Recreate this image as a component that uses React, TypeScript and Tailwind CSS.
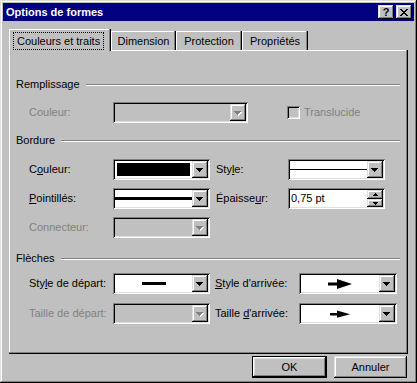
import type { ReactNode } from "react";

const sunken = "shadow-[inset_1px_1px_#808080,inset_-1px_-1px_#fff,inset_2px_2px_#000,inset_-2px_-2px_#dfdfdf]";
const raised = "bg-[#c0c0c0] shadow-[inset_-1px_-1px_#000,inset_1px_1px_#dfdfdf,inset_-2px_-2px_#808080,inset_2px_2px_#fff]";

function ArrowDown({ disabled }: { disabled?: boolean }) {
    return (
        <svg width="8" height="5" viewBox="0 0 8 5" shapeRendering="crispEdges">
            {disabled && <path d="M1 1h7v1H1z M2 2h5v1H2z M3 3h3v1H3z M4 4h1v1H4z" fill="#fff" />}
            <path d="M0 0h7v1H0z M1 1h5v1H1z M2 2h3v1H2z M3 3h1v1H3z" fill={disabled ? "#808080" : "#000"} />
        </svg>
    );
}

function Combo({ w, disabled, children }: { w: string; disabled?: boolean; children?: ReactNode }) {
    return (
        <div className={`flex h-[21px] shrink-0 p-[2px] ${sunken} ${w}`}>
            <div className={`flex flex-1 items-center ${disabled ? "bg-[#c0c0c0]" : "bg-white"}`}>{children}</div>
            <div className={`flex w-[16px] items-center justify-center pt-[1px] ${raised}`}>
                <ArrowDown disabled={disabled} />
            </div>
        </div>
    );
}

function Section({ title, className }: { title: string; className: string }) {
    return (
        <div className={`flex h-[13px] items-center ${className}`}>
            <span className="leading-[13px]">{title}</span>
            <div className="ml-[6px] h-[2px] flex-1 border-t border-b border-t-[#808080] border-b-white" />
        </div>
    );
}

function Label({ w, disabled, children }: { w: string; disabled?: boolean; children: ReactNode }) {
    return <span className={`shrink-0 leading-[13px] ${w} ${disabled ? "text-[#808080]" : "text-black"}`}>{children}</span>;
}

function Arrow({ big }: { big?: boolean }) {
    return big ? (
        <svg width="24" height="10" viewBox="0 0 24 10">
            <path d="M0 3.5h11v3H0z M9 0 L24 5 L9 10z" fill="#000" />
        </svg>
    ) : (
        <svg width="20" height="8" viewBox="0 0 20 8">
            <path d="M0 3h9v2.5H0z M7 0.5 L20 4.2 L7 7.8z" fill="#000" />
        </svg>
    );
}

export default function App() {
    return (
        <div
            className={`flex h-[383px] w-[417px] flex-col bg-[#c0c0c0] p-[3px] font-['Liberation_Sans',Arial,sans-serif] text-[11px] text-black shadow-[inset_-1px_-1px_#000,inset_1px_1px_#dfdfdf,inset_-2px_-2px_#808080,inset_2px_2px_#fff]`}
        >
            {/* Barre de titre */}
            <div className="flex h-[18px] items-center bg-[#000080] pl-[3px] pr-[2px]">
                <span className="flex-1 text-[11px] font-bold text-white">Options de formes</span>
                <div className={`flex h-[14px] w-[16px] items-center justify-center text-[11px] font-bold leading-none text-black ${raised}`}>?</div>
                <div className={`ml-[2px] flex h-[14px] w-[16px] items-center justify-center ${raised}`}>
                    <svg width="8" height="7" viewBox="0 0 8 7" shapeRendering="crispEdges">
                        <path d="M0 0h2v1H0z M6 0h2v1H6z M1 1h2v1H1z M5 1h2v1H5z M2 2h4v1H2z M3 3h2v1H3z M2 4h4v1H2z M1 5h2v1H1z M5 5h2v1H5z M0 6h2v1H0z M6 6h2v1H6z" fill="#000" />
                    </svg>
                </div>
            </div>

            {/* Onglets */}
            <div className="relative z-10 -mb-[1px] ml-[6px] mt-[8px] flex h-[22px] items-end">
                <div className="flex h-[22px] w-[102px] items-start bg-[#c0c0c0] pl-[4px] pt-[3px] shadow-[inset_-1px_0_#000,inset_-2px_0_#808080,inset_1px_1px_#fff]">
                    <span className="h-[18px] border border-dotted border-black px-[3px] leading-[16px]">Couleurs et traits</span>
                </div>
                {[
                    ["Dimension", "w-[65px]"],
                    ["Protection", "w-[66px]"],
                    ["Propriétés", "w-[66px]"],
                ].map(([t, w]) => (
                    <div
                        key={t}
                        className={`mb-[1px] flex h-[19px] items-center justify-center pt-[1px] shadow-[inset_-1px_0_#000,inset_-2px_0_#808080,inset_1px_1px_#fff] ${w}`}
                    >
                        {t}
                    </div>
                ))}
            </div>

            {/* Panneau */}
            <div className="ml-[6px] flex h-[304px] w-[399px] flex-col pl-[7px] pr-[8px] pt-[28px] shadow-[inset_-1px_-1px_#000,inset_-2px_-2px_#808080,inset_1px_1px_#fff]">
                <Section title="Remplissage" className="" />
                <div className="mt-[11px] flex items-center pl-[13px]">
                    <Label w="w-[84px]" disabled>
                        Couleur:
                    </Label>
                    <Combo w="w-[135px]" disabled />
                    <div className="ml-[39px] h-[13px] w-[13px] bg-[#c0c0c0] shadow-[inset_1px_1px_#808080,inset_-1px_-1px_#fff,inset_2px_2px_#000,inset_-2px_-2px_#dfdfdf]" />
                    <span className="ml-[4px] text-[#808080]">Translucide</span>
                </div>

                <Section title="Bordure" className="mt-[11px]" />
                <div className="mt-[12px] flex items-center pl-[13px]">
                    <Label w="w-[84px]">
                        C<u>o</u>uleur:
                    </Label>
                    <Combo w="w-[97px]">
                        <div className="mx-[2px] h-[13px] flex-1 bg-black" />
                    </Combo>
                    <Label w="ml-[6px] w-[72px]">
                        Sty<u>l</u>e:
                    </Label>
                    <Combo w="w-[97px]">
                        <div className="h-[1px] flex-1 bg-black" />
                    </Combo>
                </div>
                <div className="mt-[8px] flex items-center pl-[13px]">
                    <Label w="w-[84px]">
                        <u>P</u>ointillés:
                    </Label>
                    <Combo w="w-[97px]">
                        <div className="h-[3px] flex-1 bg-black" />
                    </Combo>
                    <Label w="ml-[6px] w-[72px]">
                        Épaisse<u>u</u>r:
                    </Label>
                    <div className={`flex h-[21px] w-[97px] p-[2px] ${sunken}`}>
                        <div className="flex flex-1 items-center bg-white pl-[1px]">0,75 pt</div>
                        <div className="flex w-[16px] flex-col">
                            <div className={`flex h-[9px] items-center justify-center ${raised}`}>
                                <svg width="5" height="3" viewBox="0 0 5 3" shapeRendering="crispEdges">
                                    <path d="M2 0h1v1H2z M1 1h3v1H1z M0 2h5v1H0z" fill="#000" />
                                </svg>
                            </div>
                            <div className={`flex h-[8px] items-center justify-center ${raised}`}>
                                <svg width="5" height="3" viewBox="0 0 5 3" shapeRendering="crispEdges">
                                    <path d="M0 0h5v1H0z M1 1h3v1H1z M2 2h1v1H2z" fill="#000" />
                                </svg>
                            </div>
                        </div>
                    </div>
                </div>
                <div className="mt-[8px] flex items-center pl-[13px]">
                    <Label w="w-[84px]" disabled>
                        Connecteur:
                    </Label>
                    <Combo w="w-[97px]" disabled />
                </div>

                <Section title="Flèches" className="mt-[14px]" />
                <div className="mt-[8px] flex items-center pl-[13px]">
                    <Label w="w-[84px]">
                        Sty<u>l</u>e de départ:
                    </Label>
                    <Combo w="w-[97px]">
                        <div className="flex flex-1 justify-center">
                            <div className="h-[3px] w-[24px] bg-black" />
                        </div>
                    </Combo>
                    <Label w="ml-[5px] w-[84px]">
                        <u>S</u>tyle d'arrivée:
                    </Label>
                    <Combo w="w-[98px]">
                        <div className="flex flex-1 justify-center">
                            <Arrow big />
                        </div>
                    </Combo>
                </div>
                <div className="mt-[9px] flex items-center pl-[13px]">
                    <Label w="w-[84px]" disabled>
                        Taille de départ:
                    </Label>
                    <Combo w="w-[97px]" disabled />
                    <Label w="ml-[5px] w-[84px]">
                        Taille <u>d</u>'arrivée:
                    </Label>
                    <Combo w="w-[98px]">
                        <div className="flex flex-1 justify-center">
                            <Arrow />
                        </div>
                    </Combo>
                </div>
            </div>

            {/* Boutons */}
            <div className="mt-[2px] flex justify-end gap-[7px] pr-[7px]">
                <button className="flex h-[22px] w-[75px] items-center justify-center bg-[#c0c0c0] shadow-[inset_0_0_0_1px_#000,inset_-2px_-2px_#000,inset_2px_2px_#fff,inset_-3px_-3px_#808080,inset_3px_3px_#dfdfdf]">
                    OK
                </button>
                <button className={`flex h-[22px] w-[73px] items-center justify-center ${raised}`}>Annuler</button>
            </div>
        </div>
    );
}
